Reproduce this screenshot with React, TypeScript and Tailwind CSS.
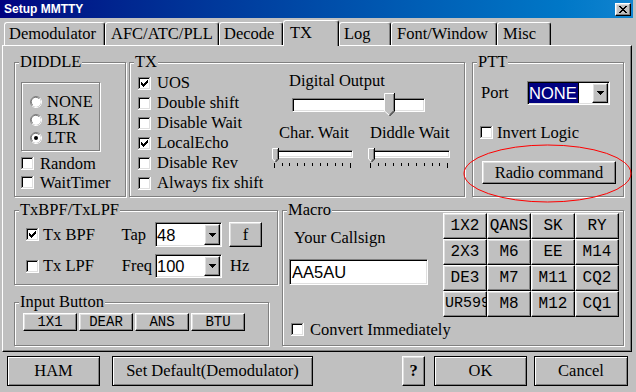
import React from 'react';

const raised =
  'bg-[#c0c0c0] border border-t-white border-l-white border-r-black border-b-black shadow-[inset_-1px_-1px_0_#808080,inset_1px_1px_0_#dfdfdf]';
const sunken =
  'bg-white border border-t-[#808080] border-l-[#808080] border-r-white border-b-white shadow-[inset_1px_1px_0_#000,inset_-1px_-1px_0_#dfdfdf]';
const etched = 'border border-[#808080] shadow-[inset_1px_1px_0_#fff,1px_1px_0_#fff]';
const mono = "font-['Liberation_Mono','Courier_New',monospace]";
const sans = "font-['Liberation_Sans',Arial,sans-serif]";
const bigBtn =
  'border border-black bg-[#c0c0c0] shadow-[inset_1px_1px_0_#fff,inset_-1px_-1px_0_#808080] flex items-center justify-center h-[30px]';

const Check = ({ on = false }: { on?: boolean }) => (
  <svg width="13" height="13" viewBox="0 0 13 13" shapeRendering="crispEdges" className="shrink-0">
    <rect width="13" height="13" fill="#fff" />
    <path d="M0 0h12v1H1v11H0z" fill="#808080" />
    <path d="M1 1h10v1H2v9H1z" fill="#000" />
    <path d="M1 11h11v1H1zM11 1h1v10h-1z" fill="#dfdfdf" />
    <path d="M0 12h13v1H0zM12 0h1v12h-1z" fill="#fff" />
    {on && (
      <path
        d="M9 3h1v1h-1zM8 4h2v1h-2zM3 5h1v1h-1zM7 5h3v1h-3zM3 6h2v1h-2zM6 6h3v1h-3zM3 7h5v1h-5zM4 8h3v1h-3zM5 9h1v1h-1z"
        fill="#000"
      />
    )}
  </svg>
);

const Radio = ({ on = false }: { on?: boolean }) => (
  <svg width="12" height="12" viewBox="0 0 12 12" className="shrink-0">
    <circle cx="6" cy="6" r="5.5" fill="#fff" stroke="#808080" />
    <path d="M10 2.1A5.5 5.5 0 0 1 2.1 10" fill="none" stroke="#fff" />
    <path d="M2.6 8.9A4.4 4.4 0 0 1 8.9 2.6" fill="none" stroke="#5a5a5a" strokeWidth="0.8" />
    {on && <circle cx="6" cy="6" r="2" fill="#000" />}
  </svg>
);

const Thumb = ({ w, h }: { w: number; h: number }) => {
  const t = Math.floor(w / 2);
  const s = h - t;
  return (
    <svg width={w} height={h} viewBox={`0 0 ${w} ${h}`}>
      <polygon points={`0,0 ${w},0 ${w},${s} ${w / 2},${h} 0,${s}`} fill="#c0c0c0" />
      <polyline points={`0.5,${s} 0.5,0.5 ${w - 1},0.5`} stroke="#fff" fill="none" />
      <line x1="0.5" y1={s} x2={w / 2} y2={h - 0.5} stroke="#fff" />
      <polyline points={`${w - 0.5},0 ${w - 0.5},${s} ${w / 2},${h}`} stroke="#000" fill="none" />
      <polyline points={`${w - 1.5},1 ${w - 1.5},${s - 0.5} ${w / 2},${h - 1.5}`} stroke="#808080" fill="none" />
    </svg>
  );
};

const Ticks = () => (
  <div className="flex justify-between items-start px-[2px]">
    {Array.from({ length: 11 }).map((_, i) => (
      <div key={i} className={`w-px bg-black ${i === 0 || i === 10 ? 'h-[5px]' : 'h-[3px]'}`} />
    ))}
  </div>
);

const SmallSlider = ({ className = '' }: { className?: string }) => (
  <div className={`relative h-[22px] ${className}`}>
    <div className={`absolute left-0 right-0 top-[4px] h-[8px] ${sunken}`} />
    <div className="absolute left-0 top-[2px] flex">
      <Thumb w={7} h={14} />
    </div>
    <div className="absolute left-0 right-0 top-[17px]">
      <Ticks />
    </div>
  </div>
);

const Arrow = () => (
  <svg width="7" height="4" viewBox="0 0 7 4" shapeRendering="crispEdges">
    <path d="M0 0h7v1H0zM1 1h5v1H1zM2 2h3v1H2zM3 3h1v1H3z" fill="#000" />
  </svg>
);

const Combo = ({ value, selected = false, className = '' }: { value: string; selected?: boolean; className?: string }) => (
  <div className={`${sunken} flex p-px ${className}`}>
    <div className={`flex-1 flex items-stretch ${sans}`}>
      {selected ? (
        <span className="bg-[#000080] text-white flex items-center border-r border-black pr-px">{value}</span>
      ) : (
        <span className="flex items-center">{value}</span>
      )}
    </div>
    <div className={`${raised} w-[16px] flex items-center justify-center`}>
      <Arrow />
    </div>
  </div>
);

const Btn = ({ className = '', children }: { className?: string; children: React.ReactNode }) => (
  <div className={`${raised} flex items-center justify-center whitespace-nowrap overflow-hidden ${className}`}>
    {children}
  </div>
);

const Group = ({ label, className = '', children }: { label: string; className?: string; children?: React.ReactNode }) => (
  <div className={`relative ${etched} ${className}`}>
    <span className="absolute left-[4px] top-[-10px] bg-[#c0c0c0] px-px whitespace-nowrap">{label}</span>
    {children}
  </div>
);

const tabs: [string, string, boolean?][] = [
  ['Demodulator', 'w-[101px] pl-[4px]'],
  ['AFC/ATC/PLL', 'w-[114px] pl-[5px]'],
  ['Decode', 'w-[64px] pl-[4px]'],
  ['TX', 'w-[56px] pl-[6px]', true],
  ['Log', 'w-[52px] pl-[4px]'],
  ['Font/Window', 'w-[106px] pl-[5px]'],
  ['Misc', 'w-[54px] pl-[5px]'],
];

const txChecks: [string, boolean][] = [
  ['UOS', true],
  ['Double shift', false],
  ['Disable Wait', false],
  ['LocalEcho', true],
  ['Disable Rev', false],
  ['Always fix shift', false],
];

const macros = ['1X2', 'QANS', 'SK', 'RY', '2X3', 'M6', 'EE', 'M14', 'DE3', 'M7', 'M11', 'CQ2', 'UR599', 'M8', 'M12', 'CQ1'];

export default function App() {
  return (
    <div className="relative w-[636px] h-[392px] overflow-hidden bg-[#c0c0c0] text-black font-['Liberation_Serif','Times_New_Roman',serif] text-[16.5px] leading-[18px]">
      {/* title bar */}
      <div className="flex items-center h-[18px] w-[633px] bg-linear-to-r from-[#000080] to-[#1084d0] pl-[4px] pr-[2px]">
        <span className={`${sans} font-bold text-[12px] leading-none text-white`}>Setup MMTTY</span>
        <div className={`ml-auto w-[16px] h-[13px] ${raised} flex items-center justify-center`}>
          <svg width="8" height="7" viewBox="0 0 8 7" shapeRendering="crispEdges">
            <path d="M0 0h2v1H0zM6 0h2v1H6zM1 1h2v1H1zM5 1h2v1H5zM2 2h4v1H2zM3 3h2v1H3zM2 4h4v1H2zM1 5h2v1H1zM5 5h2v1H5zM0 6h2v1H0zM6 6h2v1H6z" fill="#000" />
          </svg>
        </div>
      </div>

      {/* tabs */}
      <div className="flex items-end h-[27px] pl-[4px]">
        {tabs.map(([t, cls, sel]) => (
          <div
            key={t}
            className={`flex items-center whitespace-nowrap border-l border-t border-r border-l-white border-t-white border-r-black shadow-[inset_-1px_0_0_#808080] rounded-t-[3px] ${cls} ${
              sel ? 'relative z-10 h-[26px] mb-[-1px] bg-[#c0c0c0] pb-[2px]' : 'h-[23px]'
            }`}
          >
            {t}
          </div>
        ))}
      </div>

      {/* tab page */}
      <div className="ml-[2px] w-[630px] h-[307px] border border-t-white border-l-white border-r-black border-b-black shadow-[inset_-1px_-1px_0_#808080]">
        <div className="flex mt-[16px] ml-[11px]">
          <Group label="DIDDLE" className="w-[112px] h-[135px]">
            <div className={`ml-[6px] mt-[19px] w-[79px] h-[69px] ${etched} pt-[10px] pl-[8px]`}>
              {['NONE', 'BLK', 'LTR'].map((t, i) => (
                <div key={t} className="flex items-center h-[18px] gap-[5px]">
                  <Radio on={i === 2} />
                  {t}
                </div>
              ))}
            </div>
            <div className="mt-[3px] ml-[6px]">
              {['Random', 'WaitTimer'].map((t) => (
                <div key={t} className="flex items-center h-[19px] gap-[6px]">
                  <Check />
                  {t}
                </div>
              ))}
            </div>
          </Group>

          <Group label="TX" className="ml-[3px] w-[336px] h-[135px]">
            <div className="flex">
              <div className="w-[142px] pt-[10px] pl-[8px]">
                {txChecks.map(([t, on]) => (
                  <div key={t} className="flex items-center h-[20px] gap-[6px] whitespace-nowrap">
                    <Check on={on} />
                    {t}
                  </div>
                ))}
              </div>
              <div className="flex-1">
                <div className="mt-[9px] ml-[17px]">Digital Output</div>
                <div className="relative ml-[20px] mt-[3px] w-[133px] h-[23px]">
                  <div className={`absolute left-0 top-[5px] w-[133px] h-[14px] ${sunken}`} />
                  <div className="absolute left-[92px] top-0 flex">
                    <Thumb w={11} h={23} />
                  </div>
                </div>
                <div className="flex mt-[8px]">
                  <div className="w-[96px]">
                    <div className="ml-[7px] whitespace-nowrap">Char. Wait</div>
                    <SmallSlider className="mt-[4px] w-[81px]" />
                  </div>
                  <div>
                    <div className="ml-[2px] whitespace-nowrap">Diddle Wait</div>
                    <SmallSlider className="mt-[4px] w-[82px]" />
                  </div>
                </div>
              </div>
            </div>
          </Group>

          <Group label="PTT" className="ml-[7px] w-[152px] h-[135px]">
            <div className="flex items-center mt-[18px] ml-[8px] h-[24px]">
              <span className="w-[46px]">Port</span>
              <Combo className="w-[83px] h-[24px]" value="NONE" selected />
            </div>
            <div className="flex items-center mt-[18px] ml-[7px] h-[19px] gap-[4px]">
              <Check />
              Invert Logic
            </div>
            <Btn className="mt-[19px] ml-[9px] w-[134px] h-[23px]">Radio command</Btn>
          </Group>
        </div>

        <div className="flex mt-[13px] ml-[11px]">
          <div className="w-[264px]">
            <Group label="TxBPF/TxLPF" className="w-[264px] h-[75px]">
              <div className="flex items-center mt-[11px] h-[25px]">
                <div className="w-[97px] flex items-center gap-[4px] pl-[11px] whitespace-nowrap">
                  <Check on />
                  Tx BPF
                </div>
                <span className="w-[43px] text-right pr-[9px]">Tap</span>
                <Combo className="w-[67px] h-[25px]" value="48" />
                <Btn className="ml-[7px] w-[33px] h-[25px]">f</Btn>
              </div>
              <div className="flex items-center mt-[7px] h-[24px]">
                <div className="w-[97px] flex items-center gap-[4px] pl-[11px] whitespace-nowrap">
                  <Check />
                  Tx LPF
                </div>
                <span className="w-[43px] text-right pr-[3px]">Freq</span>
                <Combo className="w-[67px] h-[24px]" value="100" />
                <span className="ml-[8px]">Hz</span>
              </div>
            </Group>
            <Group label="Input Button" className="mt-[17px] w-[255px] h-[44px]">
              <div className={`flex gap-[2px] mt-[10px] ml-[8px] ${mono} text-[14px]`}>
                {['1X1', 'DEAR', 'ANS', 'BTU'].map((t) => (
                  <Btn key={t} className="w-[54px] h-[18px]">
                    {t}
                  </Btn>
                ))}
              </div>
            </Group>
          </div>

          <Group label="Macro" className="ml-[4px] w-[342px] h-[136px]">
            <div className="flex items-start">
              <div className="w-[160px]">
                <div className="mt-[18px] ml-[11px]">Your Callsign</div>
                <div className={`${sunken} ml-[6px] mt-[12px] w-[139px] h-[26px] flex items-center pl-[2px] ${sans}`}>AA5AU</div>
                <div className="mt-[35px] ml-[8px] h-[19px] flex items-center gap-[6px] whitespace-nowrap">
                  <Check />
                  Convert Immediately
                </div>
              </div>
              <div className={`mt-[2px] grid grid-cols-4 auto-rows-[26px] w-[176px] ${mono} text-[16px]`}>
                {macros.map((t) =>
                  t === 'UR599' ? (
                    <Btn key={t} className="h-[26px] !justify-start pl-px text-[15px]">
                      {t}
                    </Btn>
                  ) : (
                    <Btn key={t} className="h-[26px]">
                      {t}
                    </Btn>
                  )
                )}
              </div>
            </div>
          </Group>
        </div>
      </div>

      {/* dialog buttons */}
      <div className="flex mt-[4px] ml-[7px]">
        <div className={`${bigBtn} w-[93px]`}>HAM</div>
        <div className={`${bigBtn} ml-[12px] w-[201px]`}>Set Default(Demodulator)</div>
        <Btn className="ml-[89px] w-[23px] h-[30px] font-bold">?</Btn>
        <div className={`${bigBtn} ml-[9px] w-[93px]`}>OK</div>
        <div className={`${bigBtn} ml-[7px] w-[94px]`}>Cancel</div>
      </div>

      {/* red annotation */}
      <svg className="absolute left-[463px] top-[144px] pointer-events-none" width="170" height="60" viewBox="0 0 170 60">
        <ellipse cx="84.5" cy="29.5" rx="83.5" ry="28.5" fill="none" stroke="#ff0000" strokeWidth="1" />
      </svg>
    </div>
  );
}
